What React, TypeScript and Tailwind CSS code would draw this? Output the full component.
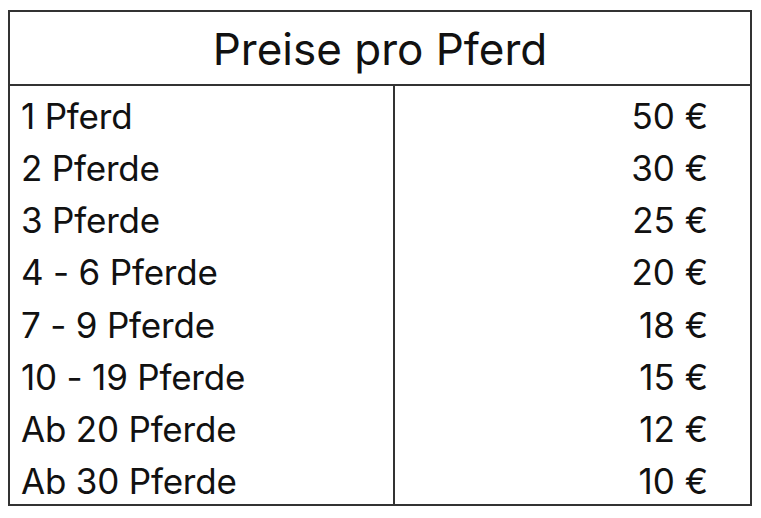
import React from "react";

const rows: [string, string][] = [
  ["1 Pferd", "50 €"],
  ["2 Pferde", "30 €"],
  ["3 Pferde", "25 €"],
  ["4 - 6 Pferde", "20 €"],
  ["7 - 9 Pferde", "18 €"],
  ["10 - 19 Pferde", "15 €"],
  ["Ab 20 Pferde", "12 €"],
  ["Ab 30 Pferde", "10 €"],
];

export default function App() {
  return (
    <div className="w-[761px] h-[518px] bg-white pt-[10px] pl-[8px] text-[#111]" style={{ fontFamily: "Inter, 'Noto Sans', sans-serif" }}>
      <div className="w-[744px] border-2 border-[#333] flex flex-col">
        <div className="h-[74px] border-b-2 border-[#333] flex items-center justify-center text-[44px] leading-none pt-[2px]">
          Preise pro Pferd
        </div>
        <div className="h-[418px] flex">
          <div className="w-[385px] border-r-2 border-[#333] flex flex-col">
            {rows.map(([l]) => (
              <div key={l} className="flex-1 flex items-center pl-[11px] pt-[8px] text-[35px] leading-none tracking-[-0.2px]">
                {l}
              </div>
            ))}
          </div>
          <div className="flex-1 flex flex-col">
            {rows.map(([l, p]) => (
              <div key={l} className="flex-1 flex items-center justify-end pr-[42px] pt-[8px] text-[35px] leading-none">
                {p}
              </div>
            ))}
          </div>
        </div>
      </div>
    </div>
  );
}
